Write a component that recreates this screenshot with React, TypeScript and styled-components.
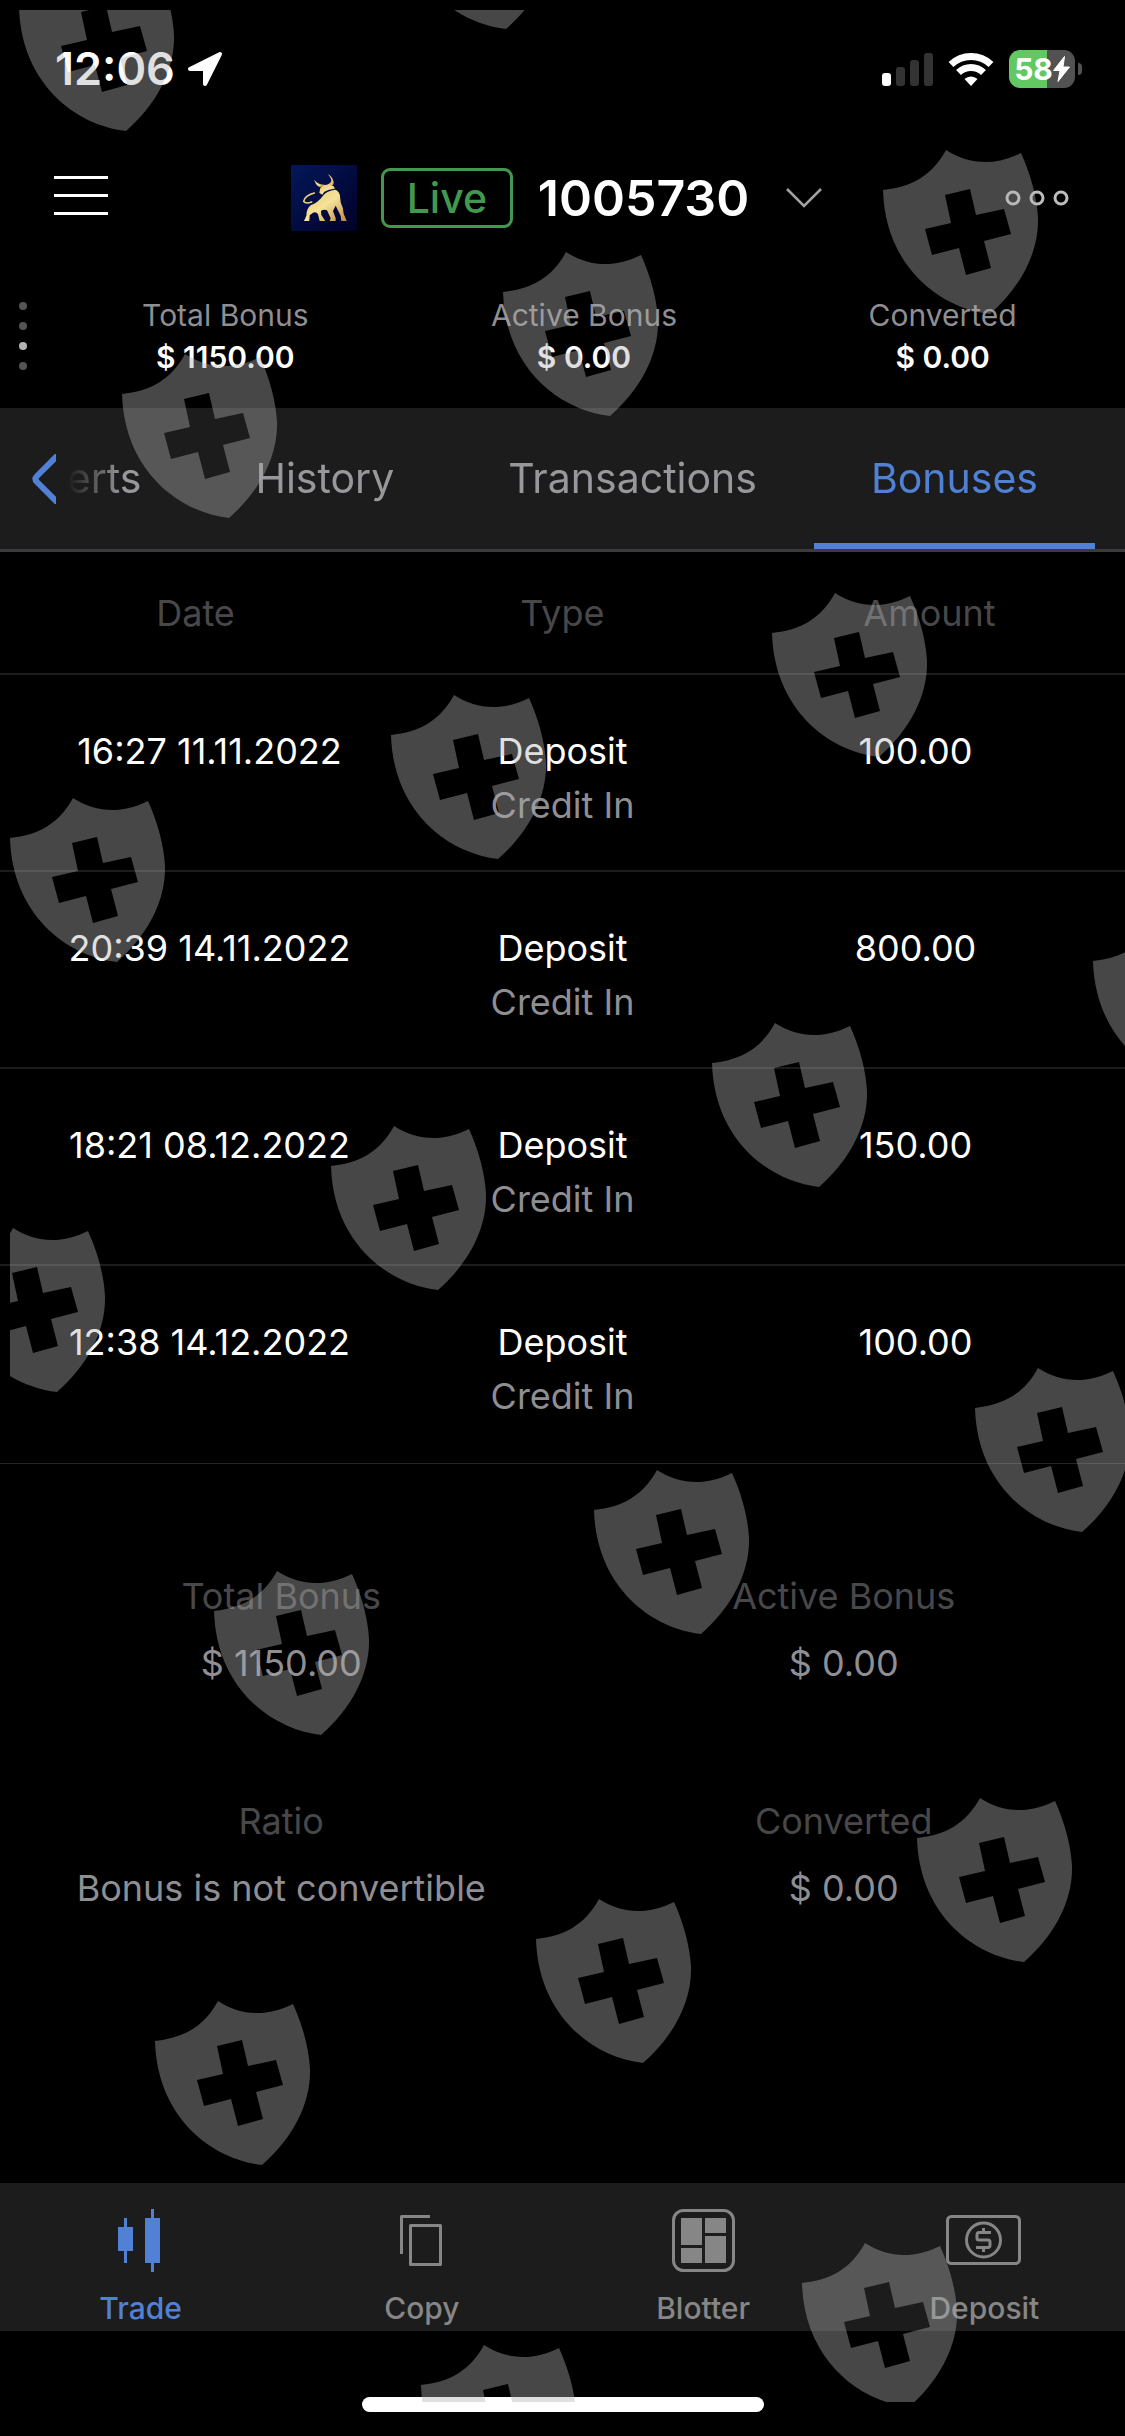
import React from "react";
import styled, { createGlobalStyle } from "styled-components";

const color = {
  bg: "#000000",
  panel: "#1c1c1c",
  line: "#1c1c1c",
  blue: "#5081d4",
  green: "#43984f",
  white: "#ffffff",
  muted: "#8e8e93",
  dim: "#48484a",
  icon: "#868686",
};

const GlobalStyle = createGlobalStyle`
  * { box-sizing: border-box; }
  body {
    margin: 0;
    background: ${color.bg};
    color: ${color.white};
    font-family: Inter, "Liberation Sans", sans-serif;
  }
  button {
    margin: 0;
    padding: 0;
    border: 0;
    background: none;
    color: inherit;
    font: inherit;
    cursor: pointer;
  }
  svg { display: block; }
`;

const Page = styled.div`
  position: relative;
  display: flex;
  flex-direction: column;
  min-height: 100vh;
  overflow: hidden;
`;

/* ---------- status bar ---------- */

const StatusBar = styled.div`
  display: flex;
  align-items: center;
  justify-content: space-between;
  height: 138px;
  padding: 0 43px 0 55px;
`;

const StatusGroup = styled.div<{ $gap: number }>`
  display: flex;
  align-items: center;
  gap: ${(p) => p.$gap}px;
`;

const Clock = styled.span`
  font-size: 45px;
  line-height: 52px;
  font-weight: 600;
`;

const Battery = styled.div`
  display: flex;
  align-items: center;
  gap: 3px;
`;

const BatteryBody = styled.div<{ $level: number }>`
  display: flex;
  align-items: center;
  justify-content: center;
  width: 66px;
  height: 38px;
  border-radius: 11px;
  background: linear-gradient(
    to right,
    #62c962 ${(p) => p.$level}%,
    #525252 ${(p) => p.$level}%
  );
  font-size: 30px;
  line-height: 38px;
  font-weight: 700;
`;

const BatteryNub = styled.div`
  width: 4px;
  height: 12px;
  border-radius: 0 4px 4px 0;
  background: #525252;
`;

/* ---------- header ---------- */

const Header = styled.header`
  display: flex;
  align-items: center;
  justify-content: space-between;
  height: 120px;
  padding: 0 56px 0 54px;
`;

const MenuButton = styled.button`
  display: flex;
  flex-direction: column;
  gap: 15px;
  width: 54px;
  padding-bottom: 5px;
`;

const MenuLine = styled.span`
  height: 3px;
  background: ${color.white};
`;

const AccountButton = styled.button`
  display: flex;
  align-items: center;
`;

const LiveBadge = styled.span`
  margin-left: 24px;
  width: 132px;
  border: 3px solid ${color.green};
  border-radius: 9px;
  color: ${color.green};
  font-size: 41px;
  line-height: 54px;
  font-weight: 500;
  text-align: center;
`;

const AccountNumber = styled.span`
  margin: 0 37px 0 25px;
  font-size: 50px;
  line-height: 60px;
  font-weight: 600;
`;

/* ---------- balance strip ---------- */

const Balances = styled.section`
  display: grid;
  grid-template-columns: 46px 1fr;
  align-items: center;
  padding: 36px 3px 30px 0;
`;

const Pager = styled.div`
  display: flex;
  flex-direction: column;
  align-items: center;
  gap: 12px;
`;

const PagerDot = styled.span<{ $active: boolean }>`
  width: 8px;
  height: 8px;
  border-radius: 50%;
  background: ${(p) => (p.$active ? "#b4b4b4" : "#545454")};
`;

const BalanceList = styled.dl`
  display: grid;
  grid-template-columns: repeat(3, 1fr);
  margin: 0;
  font-size: 30px;
  line-height: 42px;
  text-align: center;
`;

const BalanceLabel = styled.dt`
  color: ${color.muted};
`;

const BalanceValue = styled.dd`
  margin: 0;
  font-weight: 600;
`;

/* ---------- tabs ---------- */

const TabBar = styled.nav`
  display: flex;
  height: 144px;
  padding-right: 30px;
  border-bottom: 3px solid #3a3a3f;
  background: ${color.panel};
`;

const BackButton = styled.button`
  flex: none;
  display: flex;
  align-items: center;
  justify-content: flex-end;
  width: 56px;
`;

const TabStrip = styled.div`
  flex: 1;
  min-width: 0;
  display: flex;
  justify-content: flex-end;
  overflow: hidden;
  mask-image: linear-gradient(to right, transparent 12px, #000 66px);
`;

const Tab = styled.button<{ $active: boolean }>`
  flex: none;
  padding: 4px 57px 0;
  border-bottom: 6px solid ${(p) => (p.$active ? color.blue : "transparent")};
  color: ${(p) => (p.$active ? color.blue : "#98989c")};
  font-size: 41px;
  line-height: 48px;
`;

/* ---------- history table ---------- */

const Main = styled.main`
  flex: 1;
`;

const HistoryTable = styled.table`
  display: block;
  font-size: 36px;
  line-height: 54px;
  text-align: center;

  thead,
  tbody {
    display: block;
  }
`;

const Row = styled.tr<{ $head?: boolean }>`
  display: grid;
  grid-template-columns: repeat(3, 1fr);
  padding: ${(p) => (p.$head ? "34px 12px 33px" : "49px 12px 38px")};
  border-bottom: 2px solid ${color.line};

  tbody &:last-child {
    border-bottom-color: transparent;
  }
`;

const HeadCell = styled.th`
  padding: 0;
  color: ${color.dim};
  font-weight: 400;
`;

const Cell = styled.td`
  padding: 0;

  &:first-child {
    padding-left: 28px;
  }
  &:last-child {
    padding-right: 28px;
  }
`;

const CellNote = styled.div`
  color: ${color.muted};
`;

/* ---------- totals ---------- */

const Totals = styled.dl`
  display: grid;
  grid-template-columns: repeat(2, 1fr);
  row-gap: 91px;
  margin: 0;
  padding: 99px 0;
  border-top: 1px solid #242424;
  font-size: 36px;
  line-height: 67px;
  text-align: center;
`;

const TotalLabel = styled.dt`
  color: ${color.dim};
`;

const TotalValue = styled.dd`
  margin: 0;
  color: ${color.muted};
`;

/* ---------- bottom navigation ---------- */

const BottomBar = styled.nav`
  display: grid;
  grid-template-columns: repeat(4, 1fr);
  height: 148px;
  background: ${color.panel};
`;

const NavButton = styled.button<{ $active: boolean }>`
  display: flex;
  flex-direction: column;
  align-items: center;
  gap: 16px;
  padding-top: 26px;
  color: ${(p) => (p.$active ? color.blue : color.icon)};
  font-size: 30px;
  line-height: 38px;
  font-weight: 500;
`;

const HomeArea = styled.div`
  display: flex;
  align-items: flex-end;
  justify-content: center;
  height: 105px;
  padding-bottom: 24px;
`;

const HomeBar = styled.div`
  width: 402px;
  height: 15px;
  border-radius: 8px;
  background: ${color.white};
`;

/* ---------- watermark overlay ---------- */

const Overlay = styled.svg`
  position: absolute;
  top: 10px;
  left: 10px;
  width: calc(100% - 10px);
  height: calc(100% - 44px);
  overflow: hidden;
  pointer-events: none;
`;

const shields: [number, number][] = [
  [9, -3], [389, -105],
  [112, 384], [493, 282], [873, 180],
  [0, 828], [381, 725], [762, 623],
  [-60, 1258], [321, 1156], [702, 1053], [1083, 951],
  [204, 1601], [584, 1500], [965, 1398],
  [145, 2031], [526, 1929], [907, 1828],
  [411, 2375], [792, 2273],
];

function Watermark() {
  return (
    <Overlay aria-hidden="true">
      <defs>
        <path
          id="shield"
          fillRule="evenodd"
          d="M0 0C28 -3 49 -14 63 -40C86 -25 112 -24 138 -37C148 -15 154 8 155 28C156 62 138 97 107 124C55 118 2 75 0 0Z
             M62 5L68 33L42 39L49 65L76 58L83 85L108 78L101 51L128 44L121 19L93 25L87 -1Z"
        />
      </defs>
      <g fill="rgb(177,177,177)" fillOpacity="0.4">
        {shields.map(([x, y]) => (
          <use key={`${x},${y}`} href="#shield" x={x} y={y} />
        ))}
      </g>
    </Overlay>
  );
}

/* ---------- drawings ---------- */

const LocationArrow = () => (
  <svg width="36" height="36" viewBox="0 0 36 36" fill="#fff" stroke="#fff" strokeWidth="4" strokeLinejoin="round">
    <path d="M33 3L3 18H18V33Z" />
  </svg>
);

const Signal = () => (
  <svg width="51" height="34" viewBox="0 0 51 34">
    <rect x="0" y="21" width="9" height="13" rx="3" fill="#fff" />
    <rect x="14" y="15" width="9" height="19" rx="3" fill="#333" />
    <rect x="28" y="8" width="9" height="26" rx="3" fill="#333" />
    <rect x="42" y="1" width="9" height="33" rx="3" fill="#333" />
  </svg>
);

const Wifi = () => (
  <svg width="46" height="34" viewBox="0 0 46 34" fill="none" stroke="#fff">
    <path d="M3 12.500A29 29 0 0 1 43 12.500" strokeWidth="7" />
    <path d="M10.500 20.500A18 18 0 0 1 35.500 20.500" strokeWidth="7" />
    <path d="M23 34L16.500 27A9.500 9.500 0 0 1 29.500 27Z" fill="#fff" stroke="none" />
  </svg>
);

const Bolt = () => (
  <svg width="17" height="26" viewBox="0 0 17 26" fill="#fff">
    <path d="M11.500 0.500L0.500 14.500H7L5 25.500L16.500 11H10Z" stroke="#fff" strokeWidth="1" strokeLinejoin="round" />
  </svg>
);

const BullLogo = () => (
  <svg width="66" height="66" viewBox="0 0 198 198">
    <defs>
      <linearGradient id="night" x1="0" y1="0" x2="1" y2="1">
        <stop offset="0" stopColor="#04185a" />
        <stop offset="1" stopColor="#010028" />
      </linearGradient>
      <linearGradient id="gold" x1="0" y1="0" x2="1" y2="1">
        <stop offset="0" stopColor="#e9c766" />
        <stop offset="0.5" stopColor="#f6e29a" />
        <stop offset="1" stopColor="#c08a3e" />
      </linearGradient>
    </defs>
    <rect width="198" height="198" fill="url(#night)" />
    <g fill="url(#gold)">
      <path d="M70 44Q73 60 86 66L98 64L101 59Q80 59 70 44Z" />
      <path d="M110 27Q122 40 121 48Q118 57 103 60L112 68Q130 62 128 50Q125 36 110 27Z" />
      <path d="M88 68L100 60L116 60L128 64L132 71L114 74L100 80L94 89L85 84Z" />
      <path d="M98 90Q106 78 134 74Q146 80 147 94L149 112Q157 128 158 146L167 168H151L149 152L134 122L126 138L134 160V168H116L119 160L108 136Q98 131 90 138L91 150L103 168H86L81 148Q76 139 66 143L56 151L55 168H39L46 152Q46 130 60 120Q80 114 98 90Z" />
    </g>
    <path d="M62 111Q44 118 38 109Q41 92 70 84" fill="none" stroke="#e9cf7c" strokeWidth="5" strokeLinecap="round" />
  </svg>
);

const ChevronDown = () => (
  <svg width="36" height="20" viewBox="0 0 36 20" fill="none" stroke="#a2a2a2" strokeWidth="2.500">
    <path d="M1 1L18 18L35 1" />
  </svg>
);

const MoreDots = () => (
  <svg width="64" height="16" viewBox="0 0 64 16" fill="none" stroke="#bdbdbd" strokeWidth="3">
    <circle cx="8" cy="8" r="6" />
    <circle cx="32" cy="8" r="6" />
    <circle cx="56" cy="8" r="6" />
  </svg>
);

const ChevronLeft = () => (
  <svg width="24" height="50" viewBox="0 0 24 50" fill="none" stroke={color.blue} strokeWidth="6">
    <path d="M26 1L5 22Q2 25 5 28L26 49" />
  </svg>
);

const TradeIcon = () => (
  <svg width="78" height="64" viewBox="0 0 78 64" fill="currentColor">
    <rect x="16" y="18" width="15" height="24" />
    <rect x="22" y="9" width="3" height="45" />
    <rect x="43" y="9" width="15" height="45" />
    <rect x="49" y="0" width="3" height="63" />
  </svg>
);

const CopyIcon = () => (
  <svg width="78" height="64" viewBox="0 0 78 64" fill="none" stroke="currentColor" strokeWidth="3" strokeLinejoin="round">
    <path d="M18.500 45V7.500H47" />
    <rect x="27.500" y="16.500" width="30" height="39" />
  </svg>
);

const BlotterIcon = () => (
  <svg width="78" height="64" viewBox="0 0 78 64" fill="currentColor">
    <rect x="9.500" y="1.500" width="60" height="60" rx="10" fill="none" stroke="currentColor" strokeWidth="3" />
    <rect x="17" y="9" width="21" height="27" />
    <rect x="17" y="39" width="21" height="15" />
    <rect x="41" y="9" width="21" height="15" />
    <rect x="41" y="27" width="21" height="27" />
  </svg>
);

const DepositIcon = () => (
  <svg width="78" height="64" viewBox="0 0 78 64" fill="none" stroke="currentColor" strokeWidth="3" strokeLinejoin="round">
    <rect x="2.500" y="7.500" width="72" height="47" rx="4" />
    <circle cx="38.500" cy="31" r="17" />
    <path d="M46 23.500H34Q32 23.500 32 26V29Q32 31 34 31H43Q45 31 45 33V36Q45 38.500 43 38.500H31M38.500 19V24M38.500 38V43" />
  </svg>
);

/* ---------- data ---------- */

const balances = [
  ["Total Bonus", "$ 1150.00"],
  ["Active Bonus", "$ 0.00"],
  ["Converted", "$ 0.00"],
];

const tabs = ["Alerts", "History", "Transactions", "Bonuses"];

const history = [
  { date: "16:27 11.11.2022", amount: "100.00" },
  { date: "20:39 14.11.2022", amount: "800.00" },
  { date: "18:21 08.12.2022", amount: "150.00" },
  { date: "12:38 14.12.2022", amount: "100.00" },
];

const totals = [
  ["Total Bonus", "$ 1150.00"],
  ["Active Bonus", "$ 0.00"],
  ["Ratio", "Bonus is not convertible"],
  ["Converted", "$ 0.00"],
];

const navItems = [
  { label: "Trade", Icon: TradeIcon },
  { label: "Copy", Icon: CopyIcon },
  { label: "Blotter", Icon: BlotterIcon },
  { label: "Deposit", Icon: DepositIcon },
];

export default function App() {
  return (
    <>
      <GlobalStyle />
      <Page>
        <StatusBar>
          <StatusGroup $gap={12}>
            <Clock>12:06</Clock>
            <LocationArrow />
          </StatusGroup>
          <StatusGroup $gap={15}>
            <Signal />
            <Wifi />
            <Battery>
              <BatteryBody $level={58}>
                <span>58</span>
                <Bolt />
              </BatteryBody>
              <BatteryNub />
            </Battery>
          </StatusGroup>
        </StatusBar>

        <Header>
          <MenuButton aria-label="Menu">
            <MenuLine />
            <MenuLine />
            <MenuLine />
          </MenuButton>
          <AccountButton aria-haspopup="listbox">
            <BullLogo />
            <LiveBadge>Live</LiveBadge>
            <AccountNumber>1005730</AccountNumber>
            <ChevronDown />
          </AccountButton>
          <button aria-label="More">
            <MoreDots />
          </button>
        </Header>

        <Balances>
          <Pager>
            {[0, 1, 2, 3].map((i) => (
              <PagerDot key={i} $active={i === 2} />
            ))}
          </Pager>
          <BalanceList>
            {balances.map(([label, value]) => (
              <div key={label}>
                <BalanceLabel>{label}</BalanceLabel>
                <BalanceValue>{value}</BalanceValue>
              </div>
            ))}
          </BalanceList>
        </Balances>

        <TabBar>
          <BackButton aria-label="Previous tabs">
            <ChevronLeft />
          </BackButton>
          <TabStrip>
            {tabs.map((tab) => (
              <Tab key={tab} $active={tab === "Bonuses"}>
                {tab}
              </Tab>
            ))}
          </TabStrip>
        </TabBar>

        <Main>
          <HistoryTable>
            <thead>
              <Row $head>
                <HeadCell>Date</HeadCell>
                <HeadCell>Type</HeadCell>
                <HeadCell>Amount</HeadCell>
              </Row>
            </thead>
            <tbody>
              {history.map((item) => (
                <Row key={item.date}>
                  <Cell>{item.date}</Cell>
                  <Cell>
                    Deposit
                    <CellNote>Credit In</CellNote>
                  </Cell>
                  <Cell>{item.amount}</Cell>
                </Row>
              ))}
            </tbody>
          </HistoryTable>

          <Totals>
            {totals.map(([label, value]) => (
              <div key={label}>
                <TotalLabel>{label}</TotalLabel>
                <TotalValue>{value}</TotalValue>
              </div>
            ))}
          </Totals>
        </Main>

        <BottomBar>
          {navItems.map(({ label, Icon }) => (
            <NavButton key={label} $active={label === "Trade"}>
              <Icon />
              {label}
            </NavButton>
          ))}
        </BottomBar>
        <HomeArea>
          <HomeBar />
        </HomeArea>

        <Watermark />
      </Page>
    </>
  );
}
